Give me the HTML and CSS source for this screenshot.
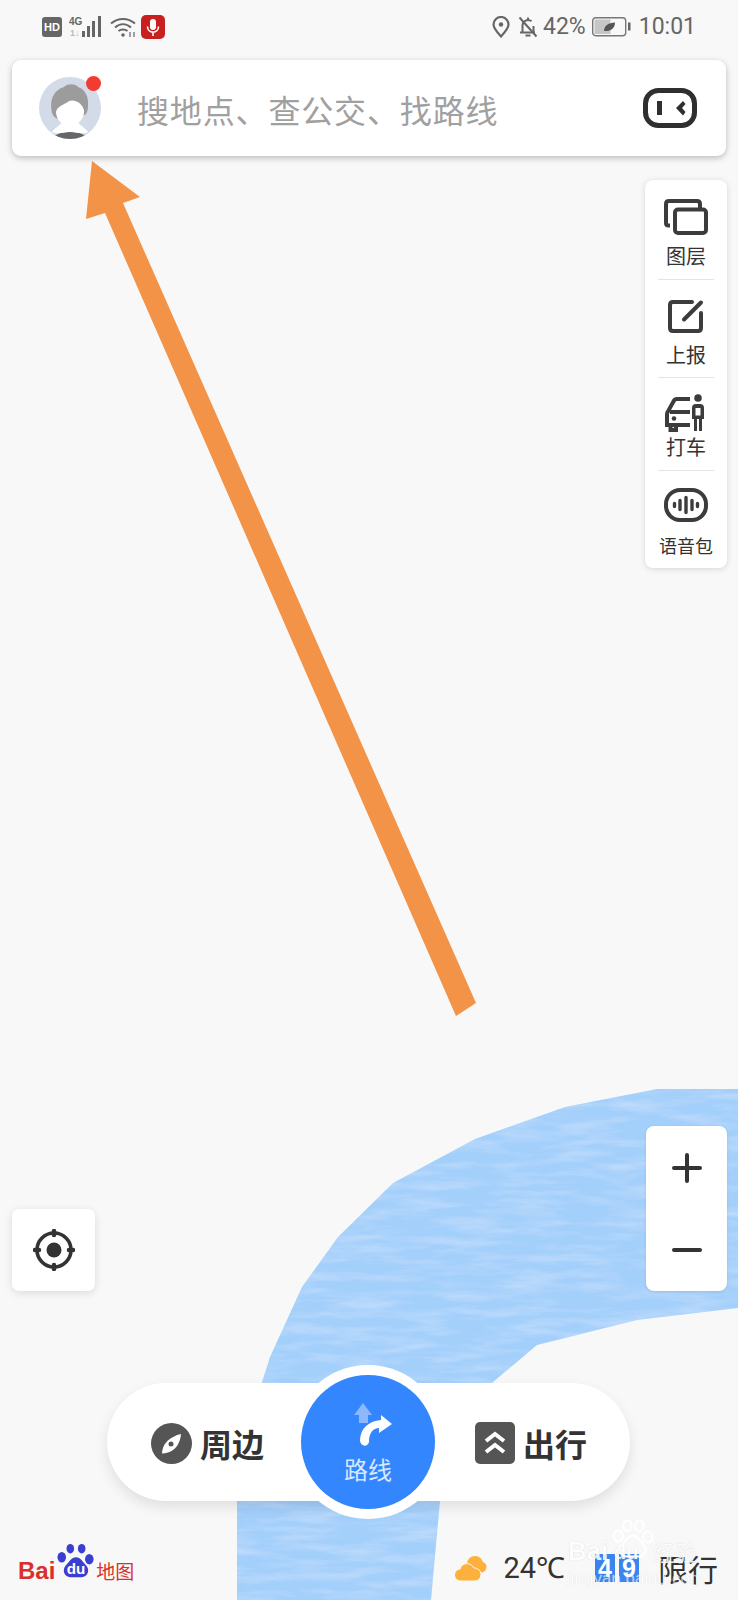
FILE: index.html
```html
<!DOCTYPE html>
<html lang="zh">
<head>
<meta charset="utf-8">
<title>百度地图</title>
<link rel="stylesheet" href="styles.css">
</head>
<body>
<div class="screen">
  <svg class="map" width="738" height="1600" viewBox="0 0 738 1600">
    <defs>
      <filter id="ripple" x="0" y="0" width="100%" height="100%">
        <feTurbulence type="fractalNoise" baseFrequency="0.018 0.11" numOctaves="4" seed="7"/>
        <feColorMatrix type="matrix" values="0 0 0 0 1  0 0 0 0 1  0 0 0 0 1  0.5 0 0 0 -0.2"/>
        <feComposite in2="SourceGraphic" operator="in"/>
        <feMerge><feMergeNode in="SourceGraphic"/><feMergeNode/></feMerge>
      </filter>
    </defs>
    <polygon class="water" filter="url(#ripple)" points="738,1089 657,1089 565,1107 475,1139 393,1183 338,1237 302,1287 270,1357 262,1382 237,1501 237,1600 431,1600 440,1501 493,1382 537,1345 637,1320 738,1308"/>
    <polygon class="arrow" points="92,161 140,197 123,203 476,1003 456,1016 105,213 86,219"/>
  </svg>

  <div class="chrome">
    <div class="status">
      <div class="status-left">
        <span class="hd">HD</span>
        <svg class="ic-signal" width="36" height="24" viewBox="0 0 36 24">
          <text class="net-4g" x="0" y="10">4G</text>
          <text class="net-1" x="1" y="21">1↓</text>
          <rect x="13" y="16" width="3" height="6" fill="#666"/>
          <rect x="18" y="11" width="3" height="11" fill="#666"/>
          <rect x="23" y="6" width="3" height="16" fill="#666"/>
          <rect x="29" y="1" width="3" height="21" fill="#666"/>
        </svg>
        <svg class="ic-wifi" width="27" height="22" viewBox="0 0 27 22" fill="none" stroke="#666" stroke-width="2">
          <path d="M1 7.500C8 1.500 18 1.500 25 7.500"/>
          <path d="M5 11.500C10 7 16 7 21 11.500"/>
          <path d="M8.500 15C11 13 15 13 17.500 15"/>
          <circle cx="13" cy="19" r="1.800" fill="#666" stroke="none"/>
          <path d="M20 16v5M24 16v5" stroke-width="1.200"/>
        </svg>
        <span class="mic">
          <svg width="24" height="24" viewBox="0 0 24 24" fill="none" stroke="#fff" stroke-width="1.600">
            <rect x="9" y="4" width="6" height="11" rx="3" fill="#fff" stroke="none"/>
            <path d="M6.500 11.500C6.500 19 17.500 19 17.500 11.500M12 17.500V21"/>
          </svg>
        </span>
      </div>
      <div class="status-right">
        <svg width="18" height="22" viewBox="0 0 18 22" fill="none" stroke="#666" stroke-width="2.200">
          <path d="M9 20.500C4 15 1.500 11.500 1.500 8.500a7.500 7.500 0 0 1 15 0C16.500 11.500 14 15 9 20.500Z"/>
          <circle cx="9" cy="8.500" r="2.200" fill="#666" stroke="none"/>
        </svg>
        <svg class="ic-bell" width="20" height="22" viewBox="0 0 20 22" fill="none" stroke="#666" stroke-width="2">
          <path d="M2 16.500h15M4.500 16.500V9.500a5.500 5.500 0 0 1 9-4.200M15.500 10V16.500M7.500 19.500h5M10 1.500V3.500"/>
          <path d="M1.500 1.500L18.500 20.500"/>
        </svg>
        <span class="pct">42%</span>
        <svg class="ic-batt" width="39" height="20" viewBox="0 0 39 20" fill="none">
          <rect x="0.700" y="0.700" width="33" height="18" rx="3" stroke="#777" stroke-width="1.400"/>
          <rect x="2.500" y="2.500" width="16" height="14.500" fill="#c6c6c6"/>
          <rect x="36" y="5.500" width="2.500" height="8" fill="#666"/>
          <path d="M12 14C12 8 17 6 23 5.500C23 11 19 14.500 12 14Z" fill="#555"/>
        </svg>
        <span class="clock">10:01</span>
      </div>
    </div>

    <div class="search">
      <span class="avatar">
        <svg width="64" height="64" viewBox="0 0 64 64">
          <defs><clipPath id="avatar-clip"><circle cx="31" cy="32" r="31"/></clipPath></defs>
          <g clip-path="url(#avatar-clip)">
            <rect width="64" height="64" fill="#d3dae8"/>
            <path d="M10 66C12 60 20 56 31 56C42 56 50 60 52 66Z" fill="#666668"/>
            <path d="M13 56C16 51 21 50 23 46H39C41 50 46 51 49 56C44 59 38 56 31 56C24 56 18 59 13 56Z" fill="#fff"/>
            <path d="M13 37C10 25 14 14 25 11C29 7 37 8 39 11C46 13 50 21 49 30C49 34 48 37 46 39L19 43C16 42 14 40 13 37Z" fill="#9c9c9c"/>
            <path d="M17 36C18 30 25 29 30 25C36 23 43 27 45 34C46 42 39 50 31 50C23 50 17 43 17 36Z" fill="#fff"/>
          </g>
        </svg>
        <i class="dot"></i>
      </span>
      <span class="placeholder">搜地点、查公交、找路线</span>
      <svg class="scan" width="54" height="40" viewBox="0 0 54 40">
        <rect x="2.500" y="2.500" width="49" height="35" rx="13" fill="none" stroke="#2f2f2f" stroke-width="5"/>
        <rect x="14" y="13" width="5" height="14" fill="#2f2f2f"/>
        <path d="M33 20L40 13L42.500 16L39 20L42.500 24L40 27.500Z" fill="#2f2f2f"/>
      </svg>
    </div>

    <div class="tools">
      <div class="tool tool-layers">
        <svg width="44" height="36" viewBox="0 0 44 36" fill="none" stroke="#3c3c3c" stroke-width="4" stroke-linejoin="round">
          <path d="M6 26.500H4.500Q2 26.500 2 24V5Q2 2 5 2H33Q36 2 36 5V10"/>
          <rect x="11" y="10.500" width="31" height="23.500" rx="3"/>
        </svg>
        <span class="tool-label">图层</span>
      </div>
      <div class="tool tool-edit">
        <svg width="36" height="34" viewBox="0 0 36 34" fill="none" stroke="#3c3c3c" stroke-width="4" stroke-linecap="round" stroke-linejoin="round">
          <path d="M24 3H5Q2 3 2 6V29Q2 32 5 32H30Q33 32 33 29V14"/>
          <path d="M33 3.500L16 20.500"/>
        </svg>
        <span class="tool-label">上报</span>
      </div>
      <div class="tool tool-car">
        <svg width="42" height="38" viewBox="0 0 42 38" fill="none" stroke="#3c3c3c" stroke-width="4">
          <path d="M25 5H12Q9.500 5 8.500 7.500L3.500 16.500Q2 18.500 2 20.500V31H25M5.500 31V36H11V31M5 18H25"/>
          <circle cx="9" cy="24.500" r="2.300" fill="#3c3c3c" stroke="none"/>
          <circle cx="33" cy="4" r="3.800" fill="#3c3c3c" stroke="none"/>
          <path d="M27 14Q27 10 31 10H35Q39 10 39 14V25H37V37H34V25H32V37H29V25H27ZM30.500 14V21.500H35.500V14Z" fill="#3c3c3c" fill-rule="evenodd" stroke="none"/>
        </svg>
        <span class="tool-label">打车</span>
      </div>
      <div class="tool tool-voice">
        <svg width="44" height="34" viewBox="0 0 44 34" fill="none" stroke="#3c3c3c" stroke-linecap="round">
          <rect x="2" y="2" width="40" height="30" rx="14" stroke-width="4"/>
          <path d="M10.500 15.500V18.500M16 12.500V21.500M22 9.500V24.500M28 12.500V21.500M33.500 15.500V18.500" stroke-width="3.400"/>
        </svg>
        <span class="tool-label tool-label-small">语音包</span>
      </div>
    </div>
  </div>

  <div class="zoom-box">
    <svg width="30" height="30" viewBox="0 0 30 30" stroke="#333" stroke-width="4" stroke-linecap="round"><path d="M2 15H28M15 2V28"/></svg>
    <svg width="30" height="6" viewBox="0 0 30 6" stroke="#333" stroke-width="4" stroke-linecap="round"><path d="M2 3H28"/></svg>
  </div>

  <div class="locate">
    <svg width="42" height="42" viewBox="0 0 42 42" fill="none" stroke="#333">
      <circle cx="21" cy="21" r="17" stroke-width="3.600"/>
      <circle cx="21" cy="21" r="7.500" fill="#333" stroke="none"/>
      <path d="M21 2V6M21 36V40M2 21H6M36 21H40" stroke-width="4.500" stroke-linecap="round"/>
    </svg>
  </div>

  <div class="nav">
    <div class="nav-item">
      <svg width="41" height="41" viewBox="0 0 41 41">
        <circle cx="20.500" cy="20.500" r="20.500" fill="#555"/>
        <path d="M30 11C29.500 18 26.500 24 22 27C19 29 15 30.500 11 30.500C11 26.500 12.500 22 15.500 19C19 15 25 12 30 11Z" fill="#fff"/>
        <circle cx="20" cy="21" r="2.500" fill="#555"/>
      </svg>
      <span class="nav-text">周边</span>
    </div>
    <div class="nav-item">
      <svg width="40" height="42" viewBox="0 0 40 42">
        <rect width="40" height="42" rx="5" fill="#555"/>
        <path d="M11 19L20 12L29 19M11 30L20 23L29 30" fill="none" stroke="#fff" stroke-width="4" stroke-linejoin="miter"/>
      </svg>
      <span class="nav-text">出行</span>
    </div>
    <div class="route">
      <svg width="52" height="48" viewBox="0 0 52 48">
        <path d="M22 0L31 12H27V20H18V12H13Z" fill="#8db8fb"/>
        <path d="M19 38C19 26 27 18 40 17V12L51 21L38 30V25C32 25 28 30 28 39C27 44 20 44 19 38Z" fill="#fff"/>
      </svg>
      <span class="route-text">路线</span>
    </div>
  </div>

  <div class="footer">
    <div class="logo">
      <span class="logo-bai">Bai</span>
      <svg class="logo-paw" width="38" height="38" viewBox="0 0 40 38">
        <g fill="#3a3fd0">
          <ellipse cx="5" cy="14" rx="4.500" ry="5.500"/>
          <ellipse cx="14" cy="5" rx="4" ry="5"/>
          <ellipse cx="26" cy="5" rx="4" ry="5"/>
          <ellipse cx="34" cy="16" rx="4.500" ry="5.500"/>
          <path d="M20 14C25 14 27 19 31 23C35 28 32 35 26 35H14C8 35 5 28 9 23C13 19 15 14 20 14Z"/>
        </g>
        <text class="logo-du" x="20" y="32" text-anchor="middle">du</text>
      </svg>
      <span class="logo-map">地图</span>
    </div>
    <div class="info">
      <svg width="32" height="26" viewBox="0 0 32 26" fill="#fdb03c">
        <circle cx="20" cy="9" r="8"/><circle cx="26" cy="12" r="5.500"/>
        <path d="M6 26a6 6 0 0 1-1-12C7 7 16 7 19 13a6.500 6.500 0 0 1 7 6.500A6.500 6.500 0 0 1 20 26Z" stroke="#f8f8f8" stroke-width="1"/>
      </svg>
      <span class="temp">24℃</span>
      <span class="plates"><b class="plate">4</b><b class="plate">9</b></span>
      <span class="limit">限行</span>
    </div>
  </div>

  <div class="watermark">
    <svg class="wm-paw" width="42" height="42" viewBox="0 0 60 56" fill="none" stroke="#fff" stroke-width="3">
      <ellipse cx="9" cy="24" rx="6.500" ry="8"/>
      <ellipse cx="22" cy="9" rx="6" ry="7.500"/>
      <ellipse cx="39" cy="9" rx="6" ry="7.500"/>
      <ellipse cx="51" cy="25" rx="6.500" ry="8"/>
      <path d="M30 23C38 23 40 31 46 37C51 44 46 53 38 53H21C13 53 8 44 14 37C20 31 22 23 30 23Z"/>
    </svg>
    <span class="wm-bai">Bai</span>
    <span class="wm-du">du</span>
    <span class="wm-cn">经验</span>
    <span class="wm-url">jingyan.baidu.com</span>
  </div>
</div>
</body>
</html>
```
FILE: styles.css
```css
* { box-sizing: border-box; }
html, body { margin: 0; padding: 0; }
body { font-family: "Noto Sans CJK SC", "Noto Sans", sans-serif; background: #f8f8f8; }

.screen { position: relative; width: 738px; height: 1600px; overflow: hidden; background: #f8f8f8; }
.map { position: absolute; inset: 0; display: block; }
.water { fill: #a3cffb; }
.arrow { fill: #f39348; }
.chrome { position: relative; }

/* status bar */
.status { height: 60px; display: flex; align-items: center; justify-content: space-between; padding: 0 42px 7px 42px; color: #666; }
.status-left, .status-right { display: flex; align-items: center; }
.hd { width: 20px; height: 20px; border-radius: 3px; background: #666; color: #fff; font: 700 11px/20px "Liberation Sans", sans-serif; text-align: center; margin-right: 7px; }
.ic-signal { margin-right: 5px; }
.net-4g { font: 700 10px "Liberation Sans", sans-serif; fill: #666; }
.net-1 { font: 700 9px "Liberation Sans", sans-serif; fill: #bbb; }
.ic-wifi { margin-right: 4px; }
.mic { width: 24px; height: 24px; border-radius: 5px; background: #c8201f; display: flex; }
.ic-bell { margin-left: 8px; }
.pct { font: 400 23px/1 "Roboto", sans-serif; margin-left: 5px; }
.ic-batt { margin-left: 6px; }
.clock { font: 400 23px/1 "Roboto", sans-serif; margin-left: 8px; }

/* search */
.search { height: 96px; margin: 0 12px; background: #fff; border-radius: 9px; box-shadow: 0 2px 6px rgba(0, 0, 0, .25); display: flex; align-items: center; padding: 0 29px 0 27px; }
.avatar { position: relative; width: 64px; height: 64px; display: block; flex: none; }
.avatar svg { display: block; }
.dot { position: absolute; left: 47px; top: 0; width: 15px; height: 15px; border-radius: 50%; background: #f33c30; }
.placeholder { margin-left: 34px; flex: 1; font-size: 32px; letter-spacing: .85px; color: #a0a0a0; line-height: 1; padding-top: 2px; }
.scan { flex: none; }

/* right tools */
.tools { width: 82px; height: 388px; margin: 24px 11px 0 auto; background: #fff; border-radius: 8px; box-shadow: 0 1px 6px rgba(0, 0, 0, .14); display: flex; flex-direction: column; padding: 0 13px; }
.tool { display: flex; flex-direction: column; align-items: center; border-bottom: 1px solid #e4e4e4; }
.tool:last-child { border-bottom: 0; }
.tool-layers { height: 100px; padding-top: 19px; }
.tool-edit { height: 98px; padding-top: 19px; }
.tool-car { height: 93px; padding-top: 16px; }
.tool-voice { padding-top: 17px; }
.tool svg { flex: none; display: block; }
.tool-label { font-size: 20px; line-height: 24px; color: #333; white-space: nowrap; margin-top: 9px; }
.tool-car .tool-label { margin-top: 3px; }
.tool-edit .tool-label { margin-top: 10px; }
.tool-voice .tool-label-small { font-size: 18px; margin-top: 11px; }

/* floating map controls */
.zoom-box { position: absolute; left: 646px; top: 1126px; width: 81px; height: 165px; background: #fff; border-radius: 8px; box-shadow: 0 1px 3px rgba(0, 0, 0, .1); display: flex; flex-direction: column; align-items: center; justify-content: space-between; padding: 27px 0 38px; }
.locate { position: absolute; left: 12px; top: 1209px; width: 83px; height: 82px; background: #fff; border-radius: 7px; box-shadow: 0 2px 8px rgba(0, 0, 0, .12); display: flex; align-items: center; justify-content: center; }

/* bottom nav pill */
.nav { position: absolute; left: 107px; top: 1383px; width: 523px; height: 118px; background: #fff; border-radius: 59px; box-shadow: 0 6px 14px rgba(0, 0, 0, .1); display: flex; align-items: center; justify-content: space-between; padding: 2px 43px 0 44px; }
.nav-item { display: flex; align-items: center; gap: 8px; }
.nav-text { font-size: 32px; font-weight: 700; line-height: 1; color: #333; }
.route { position: absolute; left: 194px; top: -8px; width: 134px; height: 134px; border-radius: 50%; background: #3386fd; box-shadow: 0 0 0 10px #fff, 0 0 3px 1px #a9ccfb; display: flex; flex-direction: column; align-items: center; padding-top: 28px; }
.route svg { margin-left: -2px; display: block; }
.route-text { font-size: 24px; line-height: 30px; color: #d8e8ff; margin-top: 3px; }

/* footer */
.footer { position: absolute; left: 0; right: 0; bottom: 0; height: 68px; display: flex; align-items: flex-end; justify-content: space-between; padding: 0 20px 12px 18px; }
.logo { display: flex; align-items: flex-end; margin-bottom: 4px; }
.logo-bai { font: 700 24px/26px "Liberation Sans", sans-serif; color: #d9302c; }
.logo-paw { margin: 0 1px 3px 2px; }
.logo-du { font: 700 16px "Liberation Sans", sans-serif; fill: #fff; }
.logo-map { font-size: 19px; line-height: 24px; color: #d9302c; margin-bottom: 1px; }
.info { display: flex; align-items: center; }
.temp { font: 400 29px/40px "Roboto", sans-serif; color: #333; margin-left: 16px; }
.plates { display: flex; gap: 4px; margin-left: 30px; }
.plate { width: 20px; height: 28px; background: #3a84f0; color: #fff; font: 700 25px/28px "Liberation Sans", sans-serif; text-align: center; }
.limit { font-size: 30px; line-height: 40px; color: #333; margin-left: 19px; }

/* watermark */
.watermark { position: absolute; left: 565px; top: 1510px; width: 150px; height: 90px; color: #fff; text-shadow: 0 0 1px #bbb; pointer-events: none; }
.wm-paw { position: absolute; left: 47px; top: 8px; }
.wm-bai { position: absolute; left: 3px; top: 26px; font: 700 26px/30px "Liberation Sans", sans-serif; opacity: .85; }
.wm-du { position: absolute; left: 49px; top: 31px; font: 700 20px/22px "Liberation Sans", sans-serif; opacity: .85; }
.wm-cn { position: absolute; left: 88px; top: 27px; font-size: 22px; line-height: 28px; opacity: .85; }
.wm-url { position: absolute; left: 2px; top: 58px; font: 400 17px/22px "Liberation Sans", sans-serif; opacity: .6; }
```
